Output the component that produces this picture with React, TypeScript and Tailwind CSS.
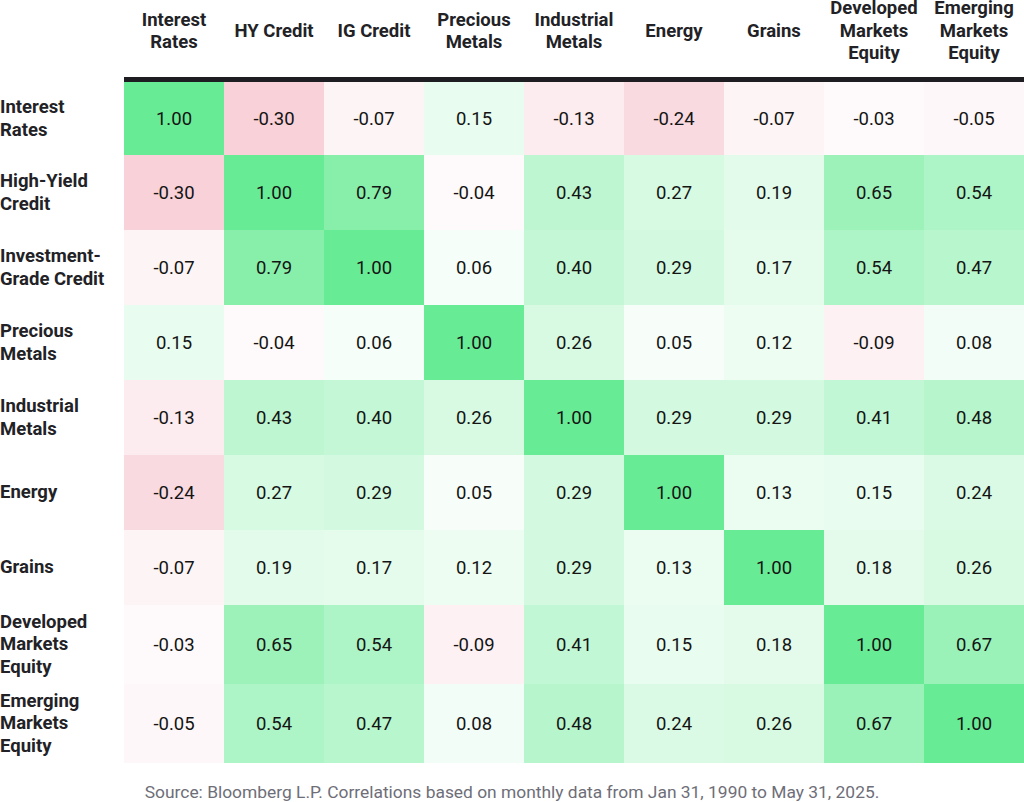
import React from "react";

const labels = [
  ["Interest", "Rates"],
  ["High-Yield", "Credit"],
  ["Investment-", "Grade Credit"],
  ["Precious", "Metals"],
  ["Industrial", "Metals"],
  ["Energy"],
  ["Grains"],
  ["Developed", "Markets", "Equity"],
  ["Emerging", "Markets", "Equity"],
];

const headers = [
  ["Interest", "Rates"],
  ["HY Credit"],
  ["IG Credit"],
  ["Precious", "Metals"],
  ["Industrial", "Metals"],
  ["Energy"],
  ["Grains"],
  ["Developed", "Markets", "Equity"],
  ["Emerging", "Markets", "Equity"],
];

const data = [
  [1.0, -0.3, -0.07, 0.15, -0.13, -0.24, -0.07, -0.03, -0.05],
  [-0.3, 1.0, 0.79, -0.04, 0.43, 0.27, 0.19, 0.65, 0.54],
  [-0.07, 0.79, 1.0, 0.06, 0.4, 0.29, 0.17, 0.54, 0.47],
  [0.15, -0.04, 0.06, 1.0, 0.26, 0.05, 0.12, -0.09, 0.08],
  [-0.13, 0.43, 0.4, 0.26, 1.0, 0.29, 0.29, 0.41, 0.48],
  [-0.24, 0.27, 0.29, 0.05, 0.29, 1.0, 0.13, 0.15, 0.24],
  [-0.07, 0.19, 0.17, 0.12, 0.29, 0.13, 1.0, 0.18, 0.26],
  [-0.03, 0.65, 0.54, -0.09, 0.41, 0.15, 0.18, 1.0, 0.67],
  [-0.05, 0.54, 0.47, 0.08, 0.48, 0.24, 0.26, 0.67, 1.0],
];

const rowHeights = ["h-[73px]", "h-[75px]", "h-[75px]", "h-[75px]", "h-[75px]", "h-[75px]", "h-[75px]", "h-[79px]", "h-[79px]"];

// green scales to 1.00, red scales to -0.30
function cellColor(v: number) {
  const mix = (b: number, t: number) => Math.round(255 + (b - 255) * t);
  if (v >= 0) {
    return `rgb(${mix(104, v)}, ${mix(235, v)}, ${mix(149, v)})`;
  }
  const t = Math.min(1, -v / 0.3);
  return `rgb(${mix(248, t)}, ${mix(209, t)}, ${mix(217, t)})`;
}

export default function App() {
  return (
    <div className="w-[1024px] h-[802px] bg-white overflow-hidden font-['Roboto',_'Liberation_Sans',_sans-serif]">
      {/* header */}
      <div className="flex h-[77px] pb-[15px]">
        <div className="w-[124px] shrink-0" />
        {headers.map((h, i) => (
          <div key={i} className="w-[100px] shrink-0 flex flex-col items-center justify-center text-center text-[18.5px] leading-[22.5px] font-bold text-[#222226]">
            {h.map((l) => (
              <span key={l}>{l}</span>
            ))}
          </div>
        ))}
      </div>
      <div className="flex">
        <div className="w-[124px] shrink-0" />
        <div className="w-[900px] h-[5px] bg-[#1e1e22]" />
      </div>

      {/* rows */}
      {data.map((row, r) => (
        <div key={r} className={`flex ${rowHeights[r]}`}>
          <div className="w-[124px] shrink-0 flex flex-col justify-center text-[18.5px] leading-[22.5px] font-bold text-[#222226]">
            {labels[r].map((l) => (
              <span key={l}>{l}</span>
            ))}
          </div>
          {row.map((v, c) => (
            <div
              key={c}
              className="w-[100px] shrink-0 flex items-center justify-center pt-[2px] text-[18.5px] text-[#141414]"
              style={{ backgroundColor: cellColor(v) }}
            >
              {v.toFixed(2)}
            </div>
          ))}
        </div>
      ))}

      <p className="mt-[17px] text-center text-[17.4px] leading-[24px] text-[#6e6e78]">
        Source: Bloomberg L.P. Correlations based on monthly data from Jan 31, 1990 to May 31, 2025.
      </p>
    </div>
  );
}
